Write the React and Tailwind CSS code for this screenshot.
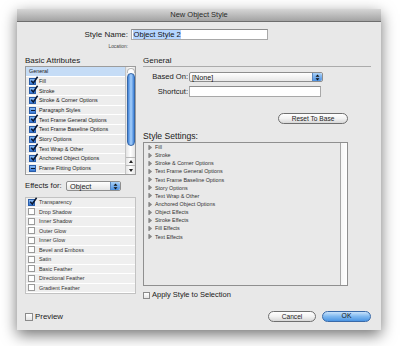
import React from 'react'

const basicItems = [
  { label: 'Fill', state: 'on' },
  { label: 'Stroke', state: 'on' },
  { label: 'Stroke & Corner Options', state: 'on' },
  { label: 'Paragraph Styles', state: 'mixed' },
  { label: 'Text Frame General Options', state: 'on' },
  { label: 'Text Frame Baseline Options', state: 'on' },
  { label: 'Story Options', state: 'on' },
  { label: 'Text Wrap & Other', state: 'on' },
  { label: 'Anchored Object Options', state: 'on' },
  { label: 'Frame Fitting Options', state: 'mixed' },
]

const effects = [
  { label: 'Transparency', state: 'on' },
  { label: 'Drop Shadow' },
  { label: 'Inner Shadow' },
  { label: 'Outer Glow' },
  { label: 'Inner Glow' },
  { label: 'Bevel and Emboss' },
  { label: 'Satin' },
  { label: 'Basic Feather' },
  { label: 'Directional Feather' },
  { label: 'Gradient Feather' },
]

const settings = [
  'Fill', 'Stroke', 'Stroke & Corner Options', 'Text Frame General Options',
  'Text Frame Baseline Options', 'Story Options', 'Text Wrap & Other',
  'Anchored Object Options', 'Object Effects', 'Stroke Effects', 'Fill Effects', 'Text Effects',
]

const SmallBox = ({ state }) => {
  if (state === 'on') {
    return (
      <span className='relative w-[7px] h-[7px] shrink-0 bg-gradient-to-b from-[#8cbcf2] to-[#3575d4] border border-[#2a5da8]'>
        <svg width='9' height='9' viewBox='0 0 9 9' className='absolute -top-[3px] left-0 overflow-visible'>
          <path d='M1.2 4.8 L3.3 7 L7.6 0.8' fill='none' stroke='#0a1830' strokeWidth='1.5' />
        </svg>
      </span>
    )
  }
  if (state === 'mixed') {
    return (
      <span className='w-[7px] h-[7px] shrink-0 bg-gradient-to-b from-[#8cbcf2] to-[#3575d4] border border-[#2a5da8] flex items-center justify-center'>
        <span className='w-[4px] h-[1.2px] bg-[#0a1830]'></span>
      </span>
    )
  }
  return <span className='w-[7px] h-[7px] shrink-0 bg-white border border-[#9a9a9a]'></span>
}

const Arrows = () => (
  <svg width='5' height='7' viewBox='0 0 5 7'>
    <path d='M2.5 0.5 L4.5 2.8 L0.5 2.8 Z M2.5 6.5 L4.5 4.2 L0.5 4.2 Z' fill='#111' />
  </svg>
)

const App = () => {
  return (
    <div className='w-[400px] h-[346px] bg-white pt-[9px] pl-[17px] text-[#1a1a1a]' style={{ fontFamily: '"Liberation Sans", Arial, sans-serif' }}>
      <div className='w-[364px] h-[321px] bg-[#e8e8e8] shadow-[0_5px_14px_rgba(0,0,0,0.55)] flex flex-col'>
        {/* title bar */}
        <div className='h-[13px] bg-gradient-to-b from-[#d6d6d6] to-[#a3a3a3] border-b border-[#6e6e6e] flex items-center justify-center text-[7.5px] text-[#2a2a2a]'>
          New Object Style
        </div>

        <div className='flex items-center mt-[7px] h-[11px]'>
          <p className='w-[111px] text-right text-[8px] leading-[11px]'>Style Name:</p>
          <div className='ml-[3px] w-[137px] h-[11px] bg-white border border-[#a8a8a8] border-t-[#8c8c8c] flex items-center pl-[1px]'>
            <span className='bg-[#b5d5ff] text-[7.6px] leading-[9px] px-[0.5px] text-[#111]'>Object Style 2</span>
          </div>
        </div>
        <div className='flex mt-[4px] h-[6px]'>
          <p className='w-[111px] text-right text-[4.8px] leading-[6px] text-[#444]'>Location:</p>
        </div>

        <div className='flex px-[8px] mt-[6px]'>
          {/* left column */}
          <div className='w-[112px] flex flex-col'>
            <p className='h-[10px] text-[8px] leading-[10px]'>Basic Attributes</p>
            <div className='h-[109px] border border-[#9c9c9c] bg-white flex'>
              <div className='flex-1 flex flex-col'>
                <div className='h-[9.7px] bg-[#c5dcf6] text-[5.4px] leading-[9.7px] pl-[3px] border-b border-white'>General</div>
                {basicItems.map(item => (
                  <div key={item.label} className='h-[9.7px] bg-[#ededed] border-b border-white flex items-center pl-[3px] gap-[3px] text-[5.4px]'>
                    <SmallBox state={item.state} />
                    <span>{item.label}</span>
                  </div>
                ))}
              </div>
              <div className='w-[10px] border-l border-[#c4c4c4] bg-gradient-to-r from-[#e4e4e4] via-white to-[#e4e4e4] flex flex-col items-center'>
                <div className='w-[8px] h-[5px] mt-[1px] rounded-t-full border border-[#b8b8b8] border-b-0 bg-white'></div>
                <div className='w-[8px] h-[73px] rounded-full bg-gradient-to-r from-[#3f82d8] via-[#a8d1fb] to-[#3f82d8] border border-[#3567a8]'></div>
                <div className='flex-1'></div>
                <div className='w-[9px] h-[8px] border-t border-[#b8b8b8] flex items-center justify-center'>
                  <span className='w-0 h-0 border-l-[2.5px] border-r-[2.5px] border-b-[3px] border-l-transparent border-r-transparent border-b-[#222]'></span>
                </div>
                <div className='w-[9px] h-[9px] border-t border-[#b8b8b8] flex items-center justify-center'>
                  <span className='w-0 h-0 border-l-[2.5px] border-r-[2.5px] border-t-[3px] border-l-transparent border-r-transparent border-t-[#222]'></span>
                </div>
              </div>
            </div>

            <div className='flex items-center mt-[6px] h-[10px]'>
              <p className='text-[7.7px] leading-[10px] w-[41px]'>Effects for:</p>
              <div className='w-[55px] h-[10px] border border-[#8e8e8e] rounded-[2px] bg-gradient-to-b from-white to-[#e6e6e6] flex items-center'>
                <span className='flex-1 pl-[3px] text-[7.4px] leading-[9px]'>Object</span>
                <span className='w-[10px] h-full bg-gradient-to-b from-[#a8d0f7] to-[#4a90e2] border-l border-[#5a86bd] rounded-r-[2px] flex items-center justify-center'>
                  <Arrows />
                </span>
              </div>
            </div>

            <div className='mt-[6px] h-[97px] border border-[#c2c2c2] bg-white flex flex-col'>
              {effects.map(item => (
                <div key={item.label} className='h-[9.5px] bg-[#efefef] border-b border-white flex items-center pl-[2px] gap-[4px] text-[5.4px] text-[#333]'>
                  <SmallBox state={item.state} />
                  <span>{item.label}</span>
                </div>
              ))}
            </div>

            <div className='flex items-center mt-[19px] h-[8px] gap-[2px]'>
              <span className='w-[8px] h-[8px] bg-gradient-to-b from-white to-[#e4e4e4] border border-[#8a8a8a]'></span>
              <span className='text-[7.9px] leading-[8px]'>Preview</span>
            </div>
          </div>

          {/* right column */}
          <div className='ml-[7px] w-[232px] flex flex-col'>
            <p className='h-[11px] w-[228px] text-[8px] leading-[10px] border-b border-[#ababab]'>General</p>

            <div className='flex items-center mt-[5px] h-[10px]'>
              <p className='w-[46px] text-right text-[7.6px] leading-[10px] pr-[1px]'>Based On:</p>
              <div className='w-[134px] h-[10px] border border-[#8e8e8e] rounded-[2px] bg-gradient-to-b from-white to-[#e8e8e8] flex items-center'>
                <span className='flex-1 pl-[2px] text-[7.2px] leading-[9px]'>[None]</span>
                <span className='w-[10px] h-full bg-gradient-to-b from-[#a8d0f7] to-[#4a90e2] border-l border-[#5a86bd] rounded-r-[2px] flex items-center justify-center'>
                  <Arrows />
                </span>
              </div>
            </div>

            <div className='flex items-center mt-[4px] h-[11px]'>
              <p className='w-[46px] text-right text-[7.6px] leading-[11px] pr-[1px]'>Shortcut:</p>
              <div className='w-[132px] h-[11px] bg-white border border-[#a8a8a8] border-t-[#8c8c8c]'></div>
            </div>

            <div className='mt-[16px] ml-[135px] w-[70px] h-[11px] rounded-full border border-[#6f6f6f] bg-gradient-to-b from-white via-[#f2f2f2] to-[#d8d8d8] flex items-center justify-center text-[6.6px] text-[#222]'>
              Reset To Base
            </div>

            <p className='mt-[7px] h-[10px] text-[8.6px] leading-[10px]'>Style Settings:</p>
            <div className='mt-[1px] h-[144px] w-[205px] border border-[#8f8f8f] bg-[#e9e9e9] flex'>
              <div className='flex-1 flex flex-col'>
                {settings.map(s => (
                  <div key={s} className='h-[8.15px] flex items-center pl-[4px] gap-[3px] text-[5.4px] text-[#333]'>
                    <svg width='4' height='5' viewBox='0 0 4 5'>
                      <path d='M0.3 0 L0.3 5 M1 0.3 L3.8 2.5 L1 4.7 Z' stroke='#888' strokeWidth='0.6' fill='#888' />
                    </svg>
                    <span>{s}</span>
                  </div>
                ))}
              </div>
              <div className='w-[7px] border-l border-[#a6a6a6] bg-gradient-to-r from-[#f6f6f6] to-white'></div>
            </div>

            <div className='flex items-center mt-[5px] h-[8px] gap-[2px]'>
              <span className='w-[7px] h-[7px] bg-gradient-to-b from-white to-[#e4e4e4] border border-[#8a8a8a]'></span>
              <span className='text-[7.5px] leading-[8px]'>Apply Style to Selection</span>
            </div>

            <div className='flex mt-[12px] ml-[125px] gap-[6px]'>
              <div className='w-[48px] h-[11px] rounded-full border border-[#6f6f6f] bg-gradient-to-b from-white via-[#f2f2f2] to-[#d8d8d8] flex items-center justify-center text-[6.6px] text-[#222]'>
                Cancel
              </div>
              <div className='w-[49px] h-[11px] rounded-full border border-[#3a6aa8] bg-gradient-to-b from-[#c8e2fb] via-[#7db7ef] to-[#4b95e3] flex items-center justify-center text-[6.8px] text-[#111]'>
                OK
              </div>
            </div>
          </div>
        </div>
      </div>
    </div>
  )
}

export default App
